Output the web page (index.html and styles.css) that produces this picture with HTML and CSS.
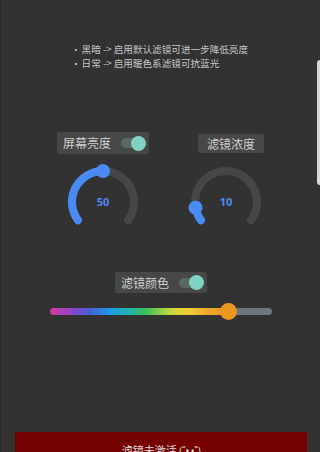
FILE: index.html
```html
<!DOCTYPE html>
<html lang="zh">
<head>
<meta charset="utf-8">
<link rel="stylesheet" href="styles.css">
</head>
<body>
<div class="page">
  <div class="notes">
    <div class="note"><span class="bullet">•</span>黑暗 -&gt; 启用默认滤镜可进一步降低亮度</div>
    <div class="note"><span class="bullet">•</span>日常 -&gt; 启用暖色系滤镜可抗蓝光</div>
  </div>

  <div class="dials">
    <div class="dial-col">
      <div class="label-box">
        <span class="label-text">屏幕亮度</span>
        <span class="toggle"><span class="thumb"></span></span>
      </div>
      <svg class="dial" width="80" height="80" viewBox="0 0 80 80">
        <path d="M14.92 58.22 A31 31 0 1 1 65.08 58.22" class="track"/>
        <path d="M14.92 58.22 A31 31 0 0 1 40 9" class="progress"/>
        <circle cx="40" cy="9" r="7" class="knob"/>
        <text x="40" y="44" class="value">50</text>
      </svg>
    </div>
    <div class="dial-col">
      <div class="label-box plain">
        <span class="label-text">滤镜浓度</span>
      </div>
      <svg class="dial" width="80" height="80" viewBox="0 0 80 80">
        <path d="M14.92 58.22 A31 31 0 1 1 65.08 58.22" class="track"/>
        <path d="M14.92 58.22 A31 31 0 0 1 9.55 45.81" class="progress"/>
        <circle cx="9.55" cy="45.81" r="7" class="knob"/>
        <text x="40" y="44" class="value">10</text>
      </svg>
    </div>
  </div>

  <div class="color-row">
    <div class="label-box">
      <span class="label-text">滤镜颜色</span>
      <span class="toggle"><span class="thumb"></span></span>
    </div>
    <div class="slider">
      <div class="slider-fill"></div>
      <div class="slider-rest"></div>
      <span class="slider-thumb"></span>
    </div>
  </div>

  <div class="spacer"></div>

  <div class="action">滤镜未激活 <span class="face">(ˇ•.•ˇ)</span></div>

  <div class="edge"></div>
</div>
</body>
</html>
```

FILE: styles.css
```css
* { box-sizing: border-box; }
html, body {
  margin: 0;
  padding: 0;
  width: 320px;
  height: 452px;
  overflow: hidden;
  background: #323232;
}
.page {
  position: relative;
  width: 320px;
  height: 452px;
  border-left: 1px solid #262626;
  display: flex;
  flex-direction: column;
  font-family: "Noto Sans CJK SC", "Noto Sans", sans-serif;
  color: #c6c6c6;
}
.notes {
  margin-top: 42px;
  padding-left: 70px;
  display: flex;
  flex-direction: column;
  font-size: 9.6px;
  line-height: 14px;
}
.note { white-space: nowrap; }
.bullet { margin-right: 1px; }

.dials {
  margin-top: 62px;
  display: flex;
  padding-left: 52px;
  gap: 23px;
}
.dial-col {
  width: 100px;
  display: flex;
  flex-direction: column;
  align-items: center;
  gap: 8px;
}
.label-box {
  height: 22px;
  display: flex;
  align-items: center;
  background: #474747;
  border-radius: 2px;
  padding: 0 4px 0 6px;
  gap: 10px;
}
.label-box.plain {
  height: 19px;
  margin-top: 2px;
  margin-bottom: 1px;
  padding: 0 9px;
  margin-left: 10px;
}
.label-text {
  font-size: 12px;
  line-height: 14px;
  color: #cdcdcd;
}
.toggle {
  position: relative;
  width: 24px;
  height: 10px;
  border-radius: 5px;
  background: #5a6864;
  display: flex;
  align-items: center;
  justify-content: flex-end;
}
.thumb {
  width: 15px;
  height: 15px;
  border-radius: 50%;
  background: #7fd3c3;
  margin-right: -1px;
}
.dial { display: block; }
.track {
  fill: none;
  stroke: #464646;
  stroke-width: 8;
  stroke-linecap: round;
}
.progress {
  fill: none;
  stroke: #4a8af4;
  stroke-width: 8;
  stroke-linecap: round;
}
.knob { fill: #4a8af4; }
.value {
  font-family: "Noto Sans", sans-serif;
  font-size: 11px;
  font-weight: 700;
  fill: #4a8af4;
  text-anchor: middle;
}

.color-row {
  margin-top: 30px;
  display: flex;
  flex-direction: column;
  align-items: center;
  gap: 15px;
}
.color-row .label-box {
  margin-left: 1px;
  height: 21px;
}
.slider {
  position: relative;
  width: 222px;
  height: 7px;
  margin-left: 1px;
  display: flex;
  border-radius: 4px;
}
.slider-fill {
  width: 178px;
  height: 7px;
  border-radius: 4px 0 0 4px;
  background: linear-gradient(90deg,
    #d8399a 0%, #8e45c8 12%, #4a5ed6 22%, #1d9ae6 34%,
    #1fb3b0 44%, #3bbf5e 54%, #c6db3c 68%, #f0cc34 78%, #f0a32a 90%, #ea9a22 100%);
}
.slider-rest {
  flex: 1;
  height: 7px;
  border-radius: 0 4px 4px 0;
  background: #6c777d;
}
.slider-thumb {
  position: absolute;
  left: 170px;
  top: -5px;
  width: 17px;
  height: 17px;
  border-radius: 50%;
  background: #e9981f;
}

.spacer { flex: 1; }
.action {
  margin: 0 13px -10px 14px;
  height: 30px;
  background: #750000;
  color: #dcdcdc;
  font-size: 11px;
  line-height: 13px;
  padding-top: 12px;
  text-align: center;
  flex: none;
  white-space: nowrap;
}
.face {
  font-family: "Noto Sans", sans-serif;
  font-size: 10px;
  letter-spacing: -0.5px;
}
.edge {
  position: absolute;
  right: 0;
  top: 60px;
  width: 3px;
  height: 125px;
  background: #d8d8d8;
  border-radius: 3px 0 0 3px;
}
```
